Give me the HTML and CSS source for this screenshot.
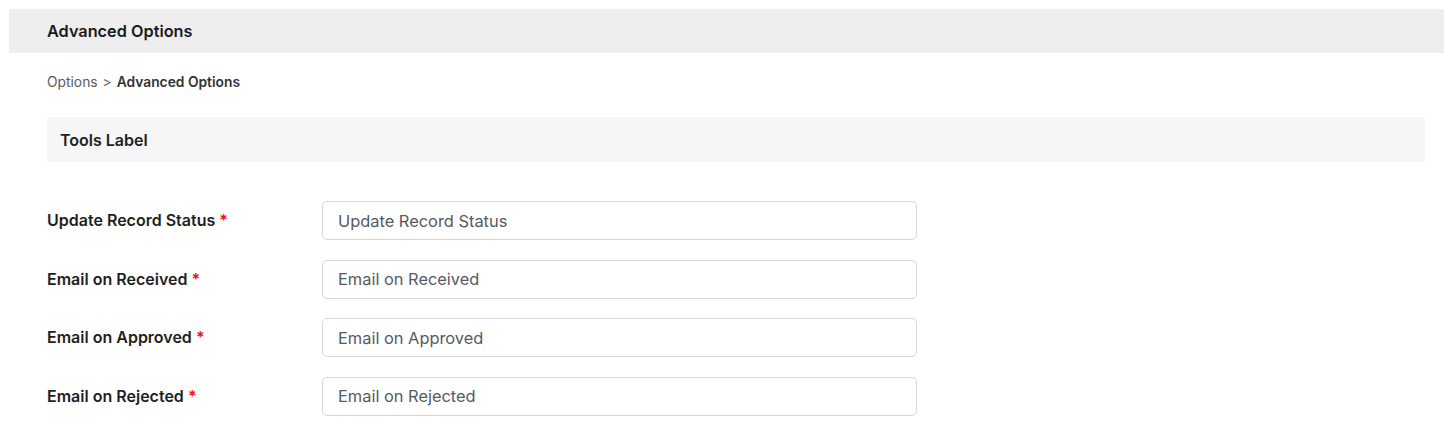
FILE: index.html
```html
<!DOCTYPE html>
<html>
<head>
<meta charset="utf-8">
<link rel="stylesheet" href="styles.css">
</head>
<body>
<div class="page">
  <div class="topbar"><h1 class="title">Advanced Options</h1></div>
  <div class="content">
    <div class="crumbs"><span class="crumb">Options</span><span class="sep">&gt;</span><span class="crumb-current">Advanced Options</span></div>
    <div class="section-head">Tools Label</div>
    <form class="form">
      <div class="row">
        <label class="label">Update Record Status <span class="req">*</span></label>
        <input class="input" type="text" placeholder="Update Record Status">
      </div>
      <div class="row">
        <label class="label">Email on Received <span class="req">*</span></label>
        <input class="input" type="text" placeholder="Email on Received">
      </div>
      <div class="row">
        <label class="label">Email on Approved <span class="req">*</span></label>
        <input class="input" type="text" placeholder="Email on Approved">
      </div>
      <div class="row">
        <label class="label">Email on Rejected <span class="req">*</span></label>
        <input class="input" type="text" placeholder="Email on Rejected">
      </div>
    </form>
  </div>
</div>
</body>
</html>
```
FILE: styles.css
```css
* { box-sizing: border-box; }
html, body { margin: 0; padding: 0; background: #fff; }
body {
  font-family: Inter, "Noto Sans", "Liberation Sans", sans-serif;
  color: #1f1f1f;
}
.page { padding: 9px 0 0 9px; }
.topbar {
  background: #eeeeee;
  height: 44px;
  display: flex;
  align-items: center;
  padding-left: 38px;
}
.title {
  margin: 0;
  font-size: 16.3px;
  font-weight: 600;
  color: #1a1a1a;
}
.content { padding: 0 19px 0 38px; }
.crumbs {
  height: 64px;
  display: flex;
  align-items: center;
  gap: 5px;
  font-size: 13.8px;
  color: #5a5a5a;
  padding-bottom: 6px;
}
.crumb-current { font-weight: 600; color: #333; }
.section-head {
  background: #f5f6f5;
  height: 45px;
  display: flex;
  align-items: center;
  padding-left: 13px;
  padding-top: 1px;
  font-size: 16px;
  font-weight: 600;
  color: #222;
}
.form {
  margin-top: 39px;
  display: flex;
  flex-direction: column;
  gap: 19.67px;
}
.row {
  display: flex;
  align-items: center;
}
.label {
  width: 275px;
  font-size: 16px;
  font-weight: 600;
  color: #1f1f1f;
  padding-bottom: 1px;
}
.req { color: #ee1111; }
.input {
  width: 595px;
  height: 39px;
  border: 1px solid #d3d6dc;
  border-radius: 5px;
  padding: 0 15px;
  font-family: inherit;
  font-size: 16.4px;
  color: #444;
  outline: none;
}
.input::placeholder { color: #555a60; }
```
